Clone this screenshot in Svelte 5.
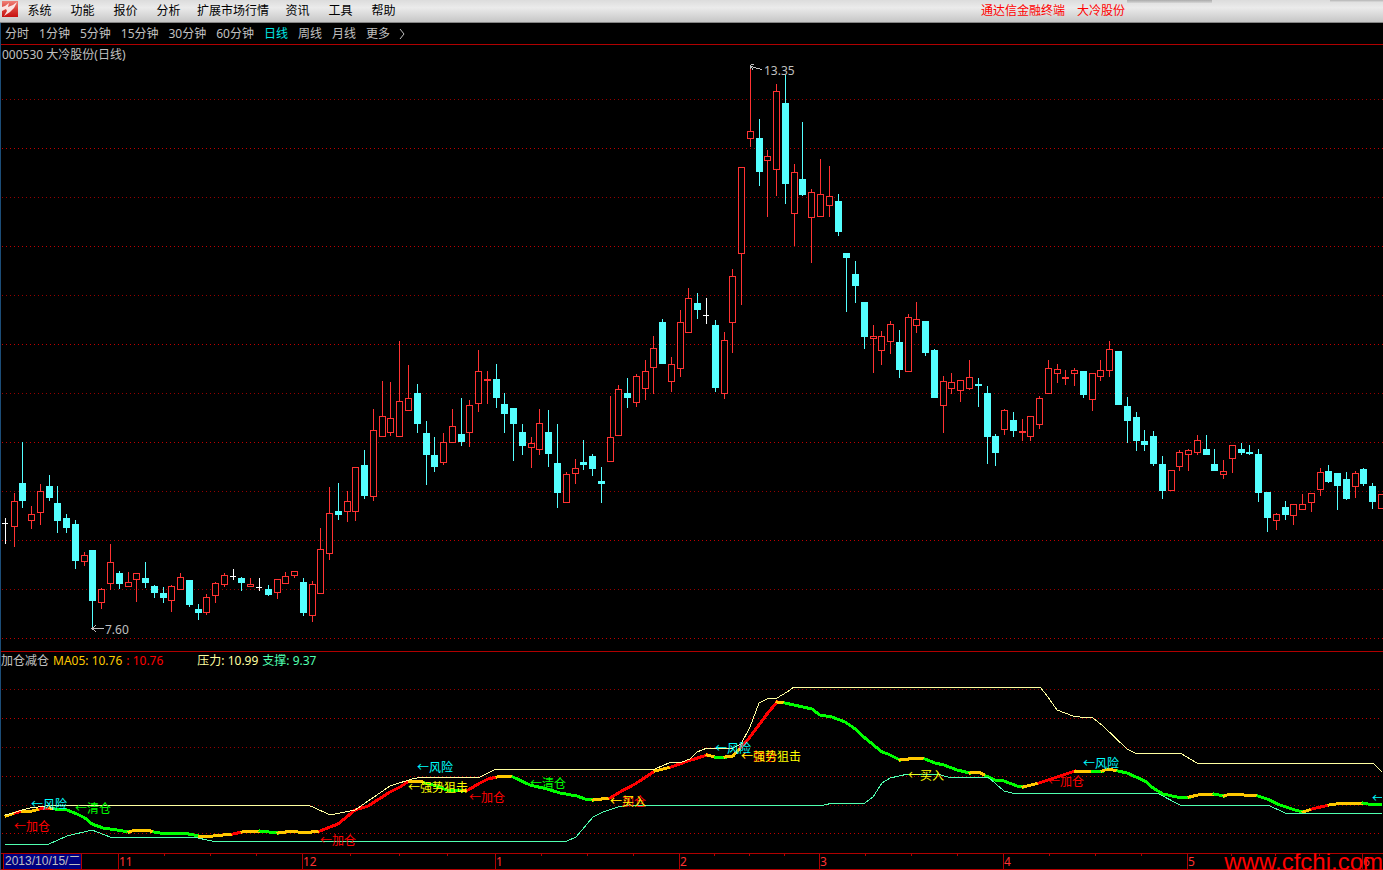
<script lang="ts">
  type Candle = [string, number, number, number, number];
  type Segment = [string, string];

  const menus = ["系统", "功能", "报价", "分析", "扩展市场行情", "资讯", "工具", "帮助"];
  const periods = ["分时", "1分钟", "5分钟", "15分钟", "30分钟", "60分钟", "日线", "周线", "月线", "更多"];
  let active = "日线";

  const priceTop = 45;
  const indicatorTop = 668;
  const axisTop = 853;

  const priceGrid = [99, 148, 197, 246, 295, 344, 393, 442, 491, 540, 589, 638];
  const indicatorGrid = [689, 718, 747, 776, 805, 833];

  // kind, high, body top, body bottom, low
  const candles: Candle[] = [
    ["flat", 518, 523, 524, 544], ["up", 493, 501, 527, 547], ["down", 442, 483, 501, 508],
    ["up", 506, 514, 521, 529], ["up", 484, 491, 513, 525], ["down", 475, 486, 498, 501],
    ["down", 486, 503, 521, 533], ["down", 514, 518, 528, 533], ["down", 520, 524, 561, 569],
    ["up", 552, 555, 562, 566], ["down", 550, 550, 601, 629], ["up", 588, 589, 603, 609],
    ["up", 544, 562, 584, 590], ["down", 571, 573, 584, 589], ["up", 572, 582, 587, 587],
    ["up", 573, 573, 580, 602], ["down", 562, 578, 583, 588], ["down", 585, 586, 593, 598],
    ["down", 587, 593, 598, 603], ["up", 585, 586, 601, 612], ["up", 573, 577, 590, 590],
    ["down", 580, 580, 605, 607], ["down", 604, 609, 613, 620], ["up", 594, 597, 613, 615],
    ["up", 582, 583, 596, 603], ["up", 573, 575, 585, 587], ["flat", 569, 576, 577, 580],
    ["down", 577, 578, 583, 591], ["up", 578, 584, 587, 587], ["flat", 578, 587, 588, 591],
    ["down", 585, 589, 595, 596], ["up", 579, 579, 593, 599], ["up", 572, 576, 584, 584],
    ["up", 571, 571, 576, 578], ["down", 578, 582, 613, 616], ["up", 581, 584, 616, 622],
    ["up", 528, 549, 594, 594], ["up", 487, 513, 554, 560], ["down", 483, 511, 515, 520],
    ["up", 491, 501, 512, 522], ["up", 467, 467, 512, 521], ["down", 450, 465, 496, 499],
    ["up", 409, 430, 497, 501], ["up", 381, 416, 437, 437], ["up", 382, 418, 433, 436],
    ["up", 341, 401, 437, 437], ["up", 365, 398, 411, 411], ["down", 384, 393, 424, 433],
    ["down", 421, 433, 455, 485], ["down", 437, 455, 467, 472], ["up", 433, 442, 463, 465],
    ["up", 409, 426, 443, 443], ["down", 398, 434, 442, 446], ["up", 400, 405, 433, 447],
    ["up", 350, 371, 404, 412], ["up", 371, 379, 381, 404], ["down", 364, 379, 398, 408],
    ["down", 393, 404, 414, 433], ["down", 408, 408, 424, 461], ["down", 424, 432, 446, 455],
    ["up", 437, 443, 448, 468], ["up", 409, 423, 450, 455], ["down", 410, 432, 454, 467],
    ["down", 424, 463, 493, 508], ["up", 472, 474, 503, 503], ["up", 459, 468, 474, 484],
    ["down", 440, 462, 465, 470], ["down", 454, 456, 469, 476], ["down", 467, 481, 484, 503],
    ["up", 396, 437, 462, 462], ["up", 385, 389, 436, 436], ["down", 378, 393, 398, 408],
    ["up", 374, 376, 403, 407], ["up", 360, 371, 389, 400], ["up", 336, 348, 368, 394],
    ["down", 319, 322, 364, 364], ["up", 357, 364, 382, 392], ["up", 310, 322, 369, 377],
    ["up", 288, 298, 333, 333], ["down", 293, 303, 310, 319], ["flat", 298, 315, 316, 324],
    ["down", 320, 325, 388, 392], ["up", 332, 340, 394, 399], ["up", 269, 276, 323, 353],
    ["up", 167, 167, 254, 305], ["up", 66, 131, 139, 147], ["down", 119, 138, 172, 186],
    ["up", 150, 156, 161, 217], ["up", 84, 91, 170, 196], ["down", 75, 103, 184, 204],
    ["up", 164, 172, 214, 246], ["down", 122, 179, 195, 196], ["up", 189, 192, 218, 263],
    ["up", 159, 194, 217, 217], ["up", 166, 196, 206, 217], ["down", 194, 201, 232, 236],
    ["down", 253, 253, 258, 312], ["down", 261, 274, 286, 303], ["down", 302, 302, 337, 349],
    ["up", 325, 336, 339, 373], ["up", 331, 336, 351, 365], ["up", 321, 324, 342, 354],
    ["down", 330, 342, 370, 378], ["up", 314, 317, 372, 372], ["up", 302, 319, 326, 333],
    ["down", 321, 321, 353, 356], ["down", 349, 350, 398, 398], ["up", 376, 381, 406, 433],
    ["up", 373, 382, 389, 394], ["up", 380, 380, 391, 402], ["up", 360, 377, 389, 390],
    ["down", 378, 384, 386, 407], ["down", 386, 393, 437, 464], ["down", 434, 436, 453, 466],
    ["up", 409, 410, 430, 435], ["down", 412, 420, 431, 437], ["up", 419, 431, 433, 441],
    ["up", 416, 416, 437, 441], ["up", 396, 398, 425, 429], ["up", 360, 368, 394, 394],
    ["up", 364, 369, 374, 383], ["up", 370, 377, 379, 385], ["up", 368, 370, 374, 386],
    ["down", 371, 371, 395, 398], ["up", 373, 373, 400, 411], ["up", 360, 370, 377, 381],
    ["up", 341, 349, 371, 377], ["down", 351, 351, 405, 405], ["down", 397, 406, 421, 443],
    ["down", 412, 417, 441, 451], ["down", 430, 441, 445, 451], ["down", 431, 436, 464, 466],
    ["down", 456, 464, 491, 499], ["up", 470, 470, 491, 491], ["up", 450, 452, 467, 471],
    ["up", 449, 450, 455, 471], ["up", 435, 440, 453, 455], ["down", 435, 449, 455, 455],
    ["down", 449, 464, 471, 471], ["up", 460, 471, 475, 479], ["up", 445, 445, 459, 473],
    ["down", 443, 449, 453, 455], ["down", 445, 452, 454, 455], ["down", 449, 454, 493, 502],
    ["down", 492, 492, 518, 532], ["up", 513, 514, 521, 530], ["down", 501, 507, 515, 520],
    ["up", 504, 504, 516, 525], ["up", 494, 504, 510, 510], ["up", 493, 493, 503, 512],
    ["up", 468, 472, 490, 496], ["down", 465, 471, 482, 483], ["down", 473, 473, 486, 510],
    ["down", 472, 479, 499, 500], ["up", 471, 473, 487, 498], ["down", 468, 469, 484, 486],
    ["down", 483, 486, 502, 509], ["up", 494, 494, 509, 509],
  ];

  const candleX = (i: number) => Math.floor(5.345 + i * 8.7648);

  const pressure =
    "5,815 13,813 22,810 30,808 53,805 307,805 313,807 330,815 340,813 355,810 390,786 412,779 423,777 480,777 496,769 655,769 671,762 682,762 690,759 697,752 707,748 733,748 741,744 750,727 759,703 767,699 777,698 787,692 794,687 1040,687 1048,697 1057,710 1073,716 1080,717 1093,718 1103,726 1127,749 1135,753 1180,753 1197,763 1373,763 1383,773";
  const support =
    "5,844 49,844 67,836 92,830 110,837 193,837 212,841 567,841 576,837 593,817 603,812 618,807 623,806 645,805 824,805 833,803 865,803 873,797 882,783 890,778 908,774 937,774 948,777 988,777 1004,791 1012,793 1157,793 1180,805 1268,805 1285,813 1383,813";

  const average: Segment[] = [
    ["hold", "6,816 15,813"],
    ["rise", "15,813 22,811"],
    ["hold", "22,811 32,811 40,809"],
    ["rise", "40,809 50,808"],
    ["hold", "50,808 55,809"],
    ["fall", "55,809 67,810 77,814 85,818 92,824 103,828 117,830 129,832"],
    ["hold", "129,832 135,830 147,830 154,832"],
    ["fall", "154,832 160,833 183,833 199,836"],
    ["hold", "199,836 213,836 233,834"],
    ["rise", "233,834 242,832"],
    ["hold", "242,832 250,831 260,831"],
    ["fall", "260,831 278,833"],
    ["hold", "278,833 293,831 303,833 320,831"],
    ["rise", "320,831 330,827 338,824 343,820 355,810 368,806 390,792 400,787 409,781"],
    ["hold", "409,781 420,781 425,783"],
    ["fall", "425,783 433,785 447,790 462,791"],
    ["hold", "462,791 468,790"],
    ["rise", "468,790 480,783 488,779 497,777"],
    ["hold", "497,777 507,776 513,777"],
    ["fall", "513,777 530,785 547,789 560,793 577,796 585,799 593,800"],
    ["hold", "593,800 610,798"],
    ["rise", "610,798 620,792 635,784 655,771"],
    ["hold", "655,771 671,767"],
    ["rise", "671,767 688,761 707,755"],
    ["hold", "707,755 715,757"],
    ["fall", "715,757 725,757"],
    ["hold", "725,757 733,756 741,747"],
    ["rise", "741,747 750,737 767,714 777,702"],
    ["hold", "777,702 785,703"],
    ["fall", "785,703 812,709 820,715 832,717 845,722 854,728 865,738 882,752 888,754 900,760"],
    ["hold", "900,760 917,758 925,759"],
    ["fall", "925,759 935,763 944,765 957,770 970,773"],
    ["hold", "970,773 979,772 986,776"],
    ["fall", "986,776 995,780 1004,781 1017,786 1023,787"],
    ["hold", "1023,787 1039,783"],
    ["rise", "1039,783 1075,771"],
    ["hold", "1075,771 1092,771"],
    ["fall", "1092,771 1102,771"],
    ["hold", "1102,771 1108,769 1118,771"],
    ["fall", "1118,771 1127,773 1145,781 1153,788 1163,794 1177,797 1189,797"],
    ["hold", "1189,797 1203,794 1214,794"],
    ["fall", "1214,794 1224,796"],
    ["hold", "1224,796 1230,794 1258,796"],
    ["fall", "1258,796 1267,799 1280,805 1295,810 1303,812"],
    ["hold", "1303,812 1312,809"],
    ["rise", "1312,809 1329,805"],
    ["hold", "1329,805 1343,803 1363,803"],
    ["fall", "1363,803 1368,804 1383,805"],
  ];

  const signals = [
    { text: "←风险", kind: "risk", x: 31, y: 809 },
    { text: "←清仓", kind: "clear", x: 75, y: 813 },
    { text: "←加仓", kind: "add", x: 14, y: 831 },
    { text: "←加仓", kind: "add", x: 320, y: 845 },
    { text: "←风险", kind: "risk", x: 417, y: 772 },
    { text: "←强势狙击", kind: "buy", x: 408, y: 792 },
    { text: "←加仓", kind: "add", x: 469, y: 802 },
    { text: "←清仓", kind: "clear", x: 530, y: 788 },
    { text: "←加仓", kind: "add", x: 610, y: 806 },
    { text: "←买入", kind: "buy", x: 610, y: 806 },
    { text: "←风险", kind: "risk", x: 715, y: 753 },
    { text: "←加仓", kind: "add", x: 741, y: 761 },
    { text: "←强势狙击", kind: "buy", x: 741, y: 761 },
    { text: "←买入", kind: "buy", x: 908, y: 780 },
    { text: "←风险", kind: "risk", x: 1083, y: 768 },
    { text: "←加仓", kind: "add", x: 1048, y: 786 },
    { text: "←风险", kind: "risk", x: 1372, y: 803 },
  ];

  const months = [
    { label: "11", x: 118 },
    { label: "12", x: 302 },
    { label: "1", x: 495 },
    { label: "2", x: 679 },
    { label: "3", x: 819 },
    { label: "4", x: 1003 },
    { label: "5", x: 1187 },
    { label: "6", x: 1362 },
  ];
  const ticks = [164, 210, 256, 350, 399, 447, 541, 587, 633, 714, 749, 784, 865, 911, 957, 1049, 1095, 1141, 1231, 1275, 1319];
</script>

<main>
  <header class="menubar">
    <svg class="logo" width="16" height="16" viewBox="0 0 16 16" aria-hidden="true">
      <defs>
        <linearGradient id="logo-red" x1="0" y1="0" x2="0" y2="1">
          <stop offset="0" stop-color="#f08078" />
          <stop offset="0.5" stop-color="#d84038" />
          <stop offset="1" stop-color="#c81010" />
        </linearGradient>
      </defs>
      <rect width="16" height="16" fill="url(#logo-red)" />
      <path d="M0 6 L3 5 L7 2 L6 6 L11 4 L15 1 L12 7 L8 11 L2 15 L5 10 L4 8 L0 10 Z" fill="#fff" opacity="0.85" />
    </svg>
    <nav class="menus">
      {#each menus as menu}
        <button>{menu}</button>
      {/each}
    </nav>
    <div class="window-title">
      <span>通达信金融终端</span>
      <span>大冷股份</span>
    </div>
  </header>

  <nav class="periods">
    {#each periods as period}
      <button class:active={period === active} on:click={() => (active = period)}>{period}</button>
    {/each}
    <svg class="more" width="6" height="10" viewBox="0 0 6 10" aria-hidden="true">
      <path d="M1 0 L5 5 L1 10" />
    </svg>
  </nav>

  <section class="price">
    <h1>000530 大冷股份(日线)</h1>
    <svg width="100%" height="606" role="img" aria-label="大冷股份 日线">
      <g transform="translate(0 {-priceTop})">
        {#each priceGrid as y, i}
          <line class="grid" class:dim={i % 2 === 0} x1="2" x2="100%" y1={y + 0.5} y2={y + 0.5} />
        {/each}
        {#each candles as [kind, high, top, bottom, low], i}
          <g class={kind}>
            <rect x={candleX(i)} y={high} width="1" height={low - high} />
            {#if kind === "flat"}
              <rect x={candleX(i) - 3} y={top} width="6" height="1" />
            {:else}
              <rect x={candleX(i) - 3} y={top} width="7" height={bottom - top} />
              {#if kind === "up" && bottom - top > 2}
                <rect class="hollow" x={candleX(i) - 2} y={top + 1} width="5" height={bottom - top - 2} />
              {/if}
            {/if}
          </g>
        {/each}
        <g class="note">
          <path d="M762 69.5 L758 68.5 L751 66.5 M750.5 69 V65 M751 64.5 H754 M751 67 L753 69.5" />
          <text x="764" y="75">13.35</text>
          <path d="M104 628.5 H92 M96 625 L92 628.5 L96 632" />
          <text x="105" y="634">7.60</text>
        </g>
      </g>
    </svg>
  </section>

  <section class="indicator">
    <div class="readout">
      <span class="name">加仓减仓</span>
      <span class="ma">MA05: 10.76</span>
      <span class="ma-last">: 10.76</span>
      <span class="pressure-value">压力: 10.99</span>
      <span class="support-value">支撑: 9.37</span>
    </div>
    <svg width="100%" height="185" role="img" aria-label="加仓减仓">
      <g transform="translate(0 {-indicatorTop})">
        {#each indicatorGrid as y, i}
          <line class="grid" class:dim={i % 2 === 0} x1="2" x2="100%" y1={y + 0.5} y2={y + 0.5} />
        {/each}
        {#each average as [trend, points]}
          <polyline class="average {trend}" {points} />
        {/each}
        <polyline class="pressure" points={pressure} />
        <polyline class="support" points={support} />
        {#each signals as signal}
          <text class={signal.kind} x={signal.x} y={signal.y}>{signal.text}</text>
        {/each}
      </g>
    </svg>
  </section>

  <svg class="axis" width="100%" height="17" role="img" aria-label="日期">
    <g transform="translate(0 {-axisTop})">
      <rect class="rule" x="1" y="853" width="100%" height="1" />
      <rect class="rule" x="1" y="869" width="100%" height="1" />
      <rect class="rule" x="3" y="854" width="79" height="15" />
      <rect class="date" x="4" y="854" width="77" height="15" />
      <text class="date-text" x="5" y="865">2013/10/15/二</text>
      {#each ticks as x}
        <rect class="rule" {x} y="854" width="1" height="2" />
      {/each}
      {#each months as month}
        <rect class="rule" x={month.x} y="854" width="1" height="15" />
        <text class="month" x={month.x + 1} y="866">{month.label}</text>
      {/each}
    </g>
  </svg>

  <a class="watermark" href="http://www.cfchi.com">www.cfchi.com</a>
</main>

<style>
  :global(body) {
    background: #000;
  }

  main {
    position: relative;
    overflow: hidden;
    background: linear-gradient(#1c4d78, #1c4d78) left / 1px 100% no-repeat #000;
    color: #c0c0c0;
    font-family: "Noto Sans", "Noto Sans CJK SC", sans-serif;
    font-size: 12px;
    line-height: 16px;
  }

  svg {
    display: block;
    shape-rendering: crispEdges;
  }

  button {
    padding: 0;
    border: 0;
    background: none;
    color: inherit;
    font: inherit;
    white-space: nowrap;
  }

  .menubar {
    display: flex;
    align-items: center;
    box-sizing: border-box;
    height: 23px;
    padding-left: 2px;
    border-bottom: 1px solid #858585;
    background:
      linear-gradient(#aaa, #d6d6d6) right 171px top / 85px 3px no-repeat,
      linear-gradient(#b4b4b4, #dcdcdc) right top / 53px 2px no-repeat,
      linear-gradient(#dcdcdc, #ebebeb 35%, #c6c6c6);
    color: #000;
  }

  .logo {
    align-self: flex-start;
    margin-top: 1px;
    shape-rendering: auto;
  }

  .menus {
    display: flex;
  }

  .menus button {
    min-width: 43px;
    padding: 0 7px;
  }

  .window-title {
    display: flex;
    gap: 12px;
    margin-left: auto;
    margin-right: 258px;
    color: #f00;
    white-space: nowrap;
  }

  .periods {
    display: flex;
    align-items: center;
    gap: 10px;
    height: 21px;
    padding-left: 4px;
    margin-left: 1px;
    border-bottom: 1px solid #b00000;
  }

  .periods .active {
    color: #00e6e6;
  }

  .more {
    margin-left: -1px;
    fill: none;
    stroke: #c0c0c0;
    shape-rendering: auto;
  }

  .price {
    display: grid;
  }

  .price > * {
    grid-area: 1 / 1;
  }

  h1 {
    margin: 2px;
    font-size: 12px;
    font-weight: normal;
    line-height: 16px;
  }

  .grid {
    stroke: #c00000;
    stroke-dasharray: 1 3;
  }

  .grid.dim {
    stroke: #960000;
  }

  .up {
    fill: #ff3232;
  }

  .down {
    fill: #54ffff;
  }

  .flat {
    fill: #fff;
  }

  .hollow {
    fill: #000;
  }

  .note path {
    fill: none;
    stroke: #c0c0c0;
  }

  .note text,
  .date-text {
    fill: #c0c0c0;
  }

  .date-text {
    font-family: "Liberation Sans", "Noto Sans CJK SC", sans-serif;
  }

  .indicator {
    margin-left: 1px;
    border-top: 1px solid #b00000;
  }

  .indicator svg {
    margin-left: -1px;
  }

  .readout {
    display: flex;
    gap: 4px;
    height: 16px;
    line-height: 18px;
    white-space: nowrap;
  }

  .ma {
    color: #ffc800;
  }

  .ma-last {
    color: #f00;
  }

  .pressure-value {
    margin-left: 30px;
    color: #ffffa0;
  }

  .support-value {
    color: #50ffb0;
  }

  polyline {
    fill: none;
    stroke-width: 1;
  }

  .pressure {
    stroke: #ffffa0;
  }

  .support {
    stroke: #50ffb0;
  }

  .average {
    stroke-width: 3;
    stroke-linejoin: round;
    stroke-linecap: square;
  }

  .rise {
    stroke: #f00;
  }

  .fall {
    stroke: #0f0;
  }

  .hold {
    stroke: #ffc800;
  }

  .risk {
    fill: #0ff;
  }

  .clear {
    fill: #0f0;
  }

  .add {
    fill: #f00;
  }

  .buy {
    fill: #ff0;
  }

  .rule {
    fill: #b00000;
  }

  .date {
    fill: #000080;
  }

  .month {
    fill: #ff3232;
  }

  .watermark {
    position: absolute;
    right: 0;
    bottom: 0;
    color: #f00;
    font-family: "Liberation Sans", Arial, sans-serif;
    font-size: 24px;
    line-height: 16px;
    text-decoration: none;
  }
</style>
